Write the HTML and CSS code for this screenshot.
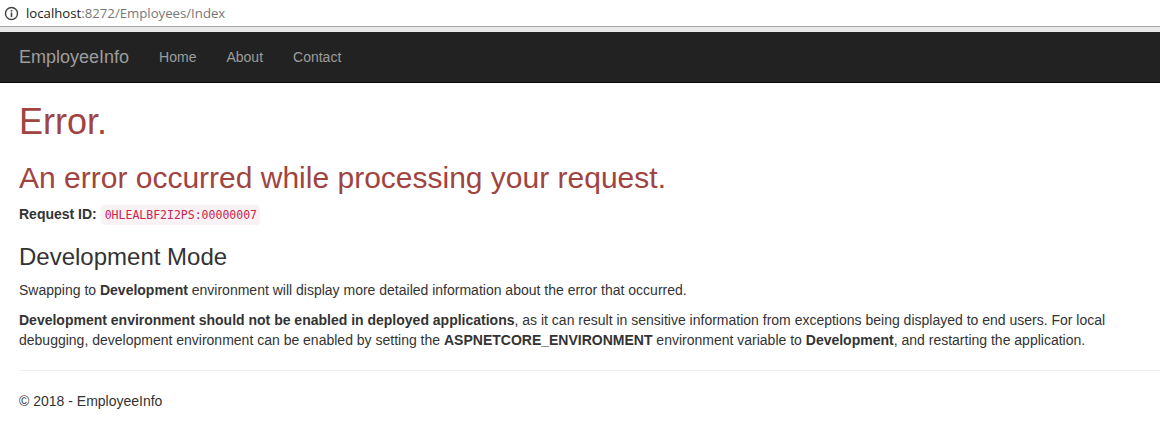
FILE: index.html
```html
<!DOCTYPE html>
<html lang="en">
<head>
<meta charset="utf-8">
<title>Error - EmployeeInfo</title>
<link rel="stylesheet" href="styles.css">
</head>
<body>
<div class="addressbar">
  <svg class="info-icon" width="15" height="15" viewBox="0 0 15 15"><circle cx="7.5" cy="7.5" r="6" fill="none" stroke="#444" stroke-width="1.4"/><rect x="6.7" y="6.5" width="1.6" height="4.5" fill="#444"/><rect x="6.7" y="4" width="1.6" height="1.6" fill="#444"/></svg>
  <span class="url"><span class="host">localhost</span>:8272/Employees/Index</span>
</div>
<div class="strip"></div>
<nav class="navbar">
  <a class="brand">EmployeeInfo</a>
  <a class="navlink">Home</a>
  <a class="navlink">About</a>
  <a class="navlink">Contact</a>
</nav>
<main class="content">
  <h1 class="err">Error.</h1>
  <h2 class="err">An error occurred while processing your request.</h2>
  <p class="req"><strong>Request ID:</strong> <code>0HLEALBF2I2PS:00000007</code></p>
  <h3>Development Mode</h3>
  <p>Swapping to <strong>Development</strong> environment will display more detailed information about the error that occurred.</p>
  <p><strong>Development environment should not be enabled in deployed applications</strong>, as it can result in sensitive information from exceptions being displayed to end users. For local debugging, development environment can be enabled by setting the <strong>ASPNETCORE_ENVIRONMENT</strong> environment variable to <strong>Development</strong>, and restarting the application.</p>
  <hr>
  <footer><p>© 2018 - EmployeeInfo</p></footer>
</main>
</body>
</html>
```
FILE: styles.css
```css
* { box-sizing: border-box; }
html, body { margin: 0; padding: 0; background: #fff; }
body {
  font-family: "Liberation Sans", Arial, sans-serif;
  font-size: 14px;
  line-height: 20px;
  color: #333;
  overflow: hidden;
}
.addressbar {
  height: 26px;
  display: flex;
  align-items: center;
  gap: 7px;
  padding: 0 0 0 4px;
  border-bottom: 1px solid #a3a3a3;
  box-sizing: content-box;
}
.info-icon { flex: none; }
.url { font-family: "Open Sans", "Noto Sans", sans-serif; font-size: 13.2px; color: #777; }
.host { color: #222; }
.strip { height: 5px; background: #e8e8e8; }
.navbar {
  height: 51px;
  background: #222;
  border-bottom: 1px solid #080808;
  display: flex;
  align-items: center;
  padding-left: 19px;
}
.brand { font-size: 18px; color: #9d9d9d; margin-right: 30px; }
.navlink { color: #9d9d9d; margin-right: 30px; }
.content { padding: 0 19px; }
h1, h2, h3 { font-weight: 500; margin: 0; }
.err { color: #a04442; }
h1 { font-size: 36px; line-height: 40px; margin-top: 19px; margin-bottom: 10px; }
h2 { font-size: 30px; line-height: 33px; margin-top: 19px; margin-bottom: 10px; }
h3 { font-size: 24px; line-height: 26px; margin-top: 19px; margin-bottom: 10px; }
p { margin: 0 0 10px; }
code {
  font-family: "DejaVu Sans Mono", "Liberation Mono", monospace;
  font-size: 11.5px;
  color: #c7254e;
  background: #f9f2f4;
  padding: 3px 3px 3px 4px;
  border-radius: 4px;
}
hr { border: 0; border-top: 1px solid #eee; margin: 20px -19px 20px 0; }
footer p { margin: 0; }
```
